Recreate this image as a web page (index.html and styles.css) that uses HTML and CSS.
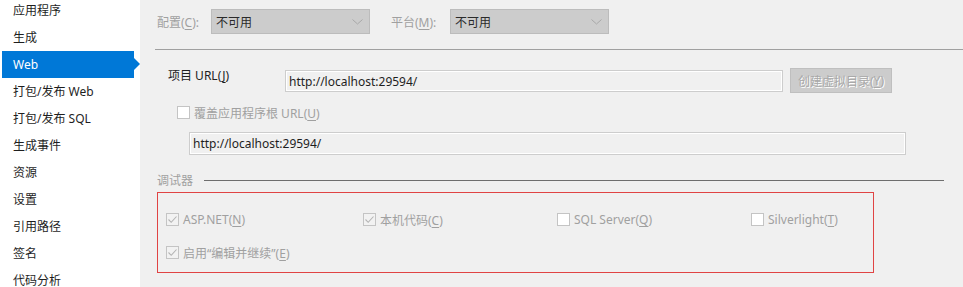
FILE: index.html
```html
<!DOCTYPE html>
<html lang="zh-CN">
<head>
<meta charset="utf-8">
<link rel="stylesheet" href="styles.css">
</head>
<body>
<div class="page">
  <nav class="sidebar">
    <ul class="nav-list">
      <li class="nav-item">应用程序</li>
      <li class="nav-item">生成</li>
      <li class="nav-item active">Web</li>
      <li class="nav-item">打包/发布 Web</li>
      <li class="nav-item">打包/发布 SQL</li>
      <li class="nav-item">生成事件</li>
      <li class="nav-item">资源</li>
      <li class="nav-item">设置</li>
      <li class="nav-item">引用路径</li>
      <li class="nav-item">签名</li>
      <li class="nav-item">代码分析</li>
    </ul>
  </nav>
  <main class="main">
    <div class="config-row">
      <span class="lbl lbl-config">配置(<u>C</u>):</span>
      <div class="select"><span>不可用</span><svg class="chev" width="11" height="6" viewBox="0 0 11 6"><path d="M0.5 0.5 L5.5 5 L10.5 0.5" fill="none" stroke="#a8a8a8" stroke-width="1"/></svg></div>
      <span class="lbl lbl-platform">平台(<u>M</u>):</span>
      <div class="select"><span>不可用</span><svg class="chev" width="11" height="6" viewBox="0 0 11 6"><path d="M0.5 0.5 L5.5 5 L10.5 0.5" fill="none" stroke="#a8a8a8" stroke-width="1"/></svg></div>
    </div>
    <div class="sep"></div>
    <div class="url-row">
      <span class="url-label">项目 URL(<u>J</u>)</span>
      <div class="textbox tb-url">http://localhost:29594/</div>
      <div class="btn">创建虚拟目录(<u>Y</u>)</div>
    </div>
    <div class="override-row">
      <span class="cb"></span>
      <span class="dim">覆盖应用程序根 URL(<u>U</u>)</span>
    </div>
    <div class="textbox tb-root">http://localhost:29594/</div>
    <div class="dbg-head">
      <span class="dim">调试器</span>
      <div class="dbg-line"></div>
    </div>
    <div class="group">
      <div class="opt"><span class="cb checked"><svg width="11" height="11" viewBox="0 0 11 11"><path d="M1.5 5.5 L4.2 8.3 L9.5 2.5" fill="none" stroke="#b4b4b4" stroke-width="1.1"/></svg></span><span class="dim">ASP.NET(<u>N</u>)</span></div>
      <div class="opt"><span class="cb checked"><svg width="11" height="11" viewBox="0 0 11 11"><path d="M1.5 5.5 L4.2 8.3 L9.5 2.5" fill="none" stroke="#b4b4b4" stroke-width="1.1"/></svg></span><span class="dim">本机代码(<u>C</u>)</span></div>
      <div class="opt"><span class="cb"></span><span class="dim">SQL Server(<u>Q</u>)</span></div>
      <div class="opt"><span class="cb"></span><span class="dim">Silverlight(<u>T</u>)</span></div>
      <div class="opt opt-wide"><span class="cb checked"><svg width="11" height="11" viewBox="0 0 11 11"><path d="M1.5 5.5 L4.2 8.3 L9.5 2.5" fill="none" stroke="#b4b4b4" stroke-width="1.1"/></svg></span><span class="dim">启用“编辑并继续”(<u>E</u>)</span></div>
    </div>
  </main>
</div>
</body>
</html>
```
FILE: styles.css
```css
html, body {
  margin: 0;
  padding: 0;
}
body {
  font-family: "Segoe UI", "Noto Sans", "Noto Sans CJK SC", sans-serif;
  font-size: 12px;
  color: #1e1e1e;
  background: #f0f0f0;
}
u {
  text-decoration: underline;
  text-underline-offset: 2px;
}
.page {
  display: flex;
  width: 963px;
  height: 287px;
  overflow: hidden;
}
.sidebar {
  width: 140px;
  flex: none;
  background: #ffffff;
}
.nav-list {
  list-style: none;
  margin: -3px 0 0 0;
  padding: 0;
}
.nav-item {
  height: 27px;
  line-height: 27px;
  padding-left: 11px;
  margin-left: 2px;
  margin-right: 6px;
  color: #1e1e1e;
  white-space: nowrap;
  position: relative;
}
.nav-item.active {
  background: #0078d7;
  color: #ffffff;
}
.nav-item.active::after {
  content: "";
  position: absolute;
  right: -6px;
  top: 7px;
  border-left: 6px solid #0078d7;
  border-top: 6px solid transparent;
  border-bottom: 6px solid transparent;
}
.main {
  flex: 1;
  padding-left: 17px;
  display: flex;
  flex-direction: column;
}
.config-row {
  display: flex;
  align-items: center;
  margin-top: 9px;
  height: 25px;
}
.lbl {
  color: #a0a0a0;
  white-space: nowrap;
}
.lbl-config {
  width: 54px;
}
.lbl-platform {
  width: 59px;
  margin-left: 21px;
}
.select {
  width: 159px;
  height: 25px;
  box-sizing: border-box;
  background: #cccccc;
  border: 1px solid #bcbcbc;
  display: flex;
  align-items: center;
  justify-content: space-between;
  padding: 0 6px 0 4px;
  color: #2a2a2a;
}
.chev {
  margin-top: 1px;
}
.sep {
  height: 1px;
  background: #a0a0a0;
  margin: 15px 0 0 -2px;
}
.url-row {
  display: flex;
  align-items: flex-start;
  margin-top: 18px;
  height: 25px;
}
.url-label {
  width: 117px;
  padding-left: 11px;
  margin-top: -1px;
  line-height: 18px;
  color: #1e1e1e;
  white-space: nowrap;
}
.textbox {
  box-sizing: border-box;
  border: 1px solid #cdcdcd;
  box-shadow: inset 0 0 0 1px #ffffff;
  background: #f0f0f0;
  color: #1e1e1e;
  display: flex;
  align-items: center;
  padding-left: 3px;
  white-space: nowrap;
}
.tb-url {
  width: 498px;
  height: 22px;
  margin-top: 2px;
}
.btn {
  width: 102px;
  height: 25px;
  box-sizing: border-box;
  margin-left: 7px;
  background: #cccccc;
  border: 1px solid #bfbfbf;
  color: #a9a9a9;
  text-shadow: 1px 1px 0 #ffffff;
  display: flex;
  align-items: center;
  justify-content: center;
  white-space: nowrap;
}
.override-row {
  display: flex;
  align-items: center;
  margin-top: 13px;
  margin-left: 20px;
  height: 13px;
}
.override-row .cb {
  margin-right: 4px;
}
.dim {
  color: #a0a0a0;
  white-space: nowrap;
}
.cb {
  width: 13px;
  height: 13px;
  box-sizing: border-box;
  border: 1px solid #c4c4c4;
  background: #ffffff;
  flex: none;
  display: inline-flex;
  align-items: center;
  justify-content: center;
}
.cb.checked {
  background: #f2f2f2;
}
.tb-root {
  width: 717px;
  height: 23px;
  margin-top: 13px;
  margin-left: 32px;
}
.dbg-head {
  display: flex;
  align-items: center;
  margin-top: 18px;
  height: 14px;
}
.dbg-line {
  width: 740px;
  height: 1px;
  background: #6e6e6e;
  margin-left: 11px;
  margin-top: 1px;
}
.group {
  width: 717px;
  height: 81px;
  box-sizing: border-box;
  border: 1px solid #e04444;
  margin-top: 5px;
  padding: 20px 0 0 8px;
  display: grid;
  grid-template-columns: 197px 194px 194px 1fr;
  grid-auto-rows: 13px;
  row-gap: 20px;
}
.opt {
  display: flex;
  align-items: center;
  gap: 4px;
}
.opt-wide {
  grid-column: 1 / span 2;
}
```
